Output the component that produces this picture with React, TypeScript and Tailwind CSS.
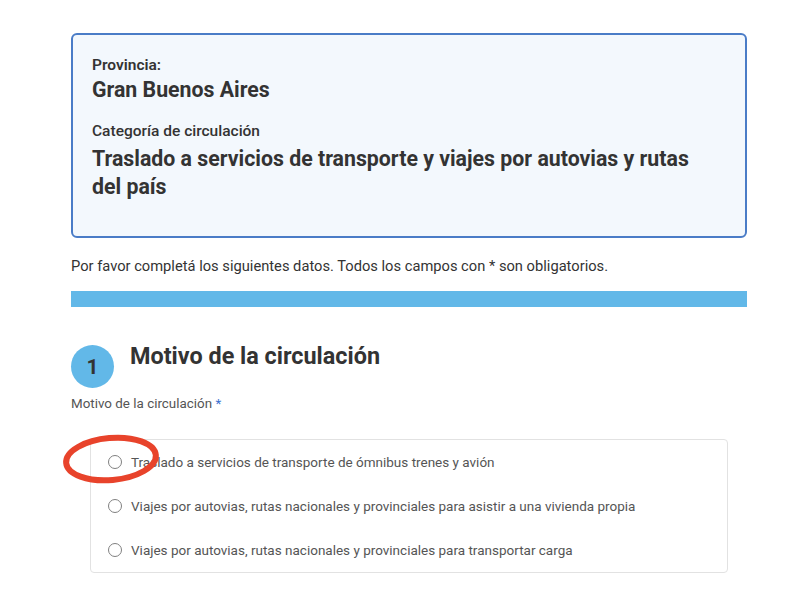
import React from 'react'

const options = [
  'Traslado a servicios de transporte de ómnibus trenes y avión',
  'Viajes por autovias, rutas nacionales y provinciales para asistir a una vivienda propia',
  'Viajes por autovias, rutas nacionales y provinciales para transportar carga',
]

export default function App() {
  return (
    <div className="relative w-[800px] h-[600px] overflow-hidden bg-white font-['Roboto',sans-serif] text-[#333]">
      <div className="ml-[71px] w-[676px] pt-[33px]">
        <div className="h-[205px] rounded-md border-2 border-[#4a7cc7] bg-[#f3f8fd] pl-[19px] pr-[40px] pt-[20px]">
          <div className="text-[15.5px] font-semibold leading-[20px]">Provincia:</div>
          <div className="mt-[1px] text-[21.3px] font-bold leading-[28px]">Gran Buenos Aires</div>
          <div className="mt-[17px] text-[15.5px] font-medium leading-[20px]">Categoría de circulación</div>
          <div className="mt-[4px] text-[21.3px] font-bold leading-[28px]">
            Traslado a servicios de transporte y viajes por autovias y rutas del país
          </div>
        </div>
        <p className="mt-[18px] text-[14.7px] leading-[20px]">
          Por favor completá los siguientes datos. Todos los campos con * son obligatorios.
        </p>
        <div className="mt-[15px] h-[16px] bg-[#62b8e8]" />
        <div className="mt-[34px] flex items-start gap-[16px]">
          <div className="mt-[4px] flex h-[43px] w-[43px] items-center justify-center rounded-full bg-[#62b8e8] pt-[3px] text-[21px] font-bold">
            1
          </div>
          <h2 className="text-[23.4px] font-bold leading-[30px]">Motivo de la circulación</h2>
        </div>
        <div className="mt-[8px] text-[13.4px] leading-[16px] text-[#555]">
          Motivo de la circulación <span className="text-[#3a6fd0]">*</span>
        </div>
        <div className="ml-[19px] mt-[27px] w-[638px] rounded-[4px] border border-[#e2e2e2]">
          {options.map((o) => (
            <label key={o} className="flex h-[44px] items-center gap-[9px] pl-[17px] text-[13.5px] leading-[18px] text-[#555]">
              <span className="h-[14px] w-[14px] shrink-0 rounded-full border border-[#808080] bg-white" />
              <span>{o}</span>
            </label>
          ))}
        </div>
      </div>
      <svg className="absolute left-[56px] top-[430px]" width="112" height="60" viewBox="0 0 112 60">
        <ellipse cx="55" cy="29" rx="45" ry="21" fill="none" stroke="#e8432b" strokeWidth="6" transform="rotate(-5 55 29)" />
      </svg>
    </div>
  )
}
